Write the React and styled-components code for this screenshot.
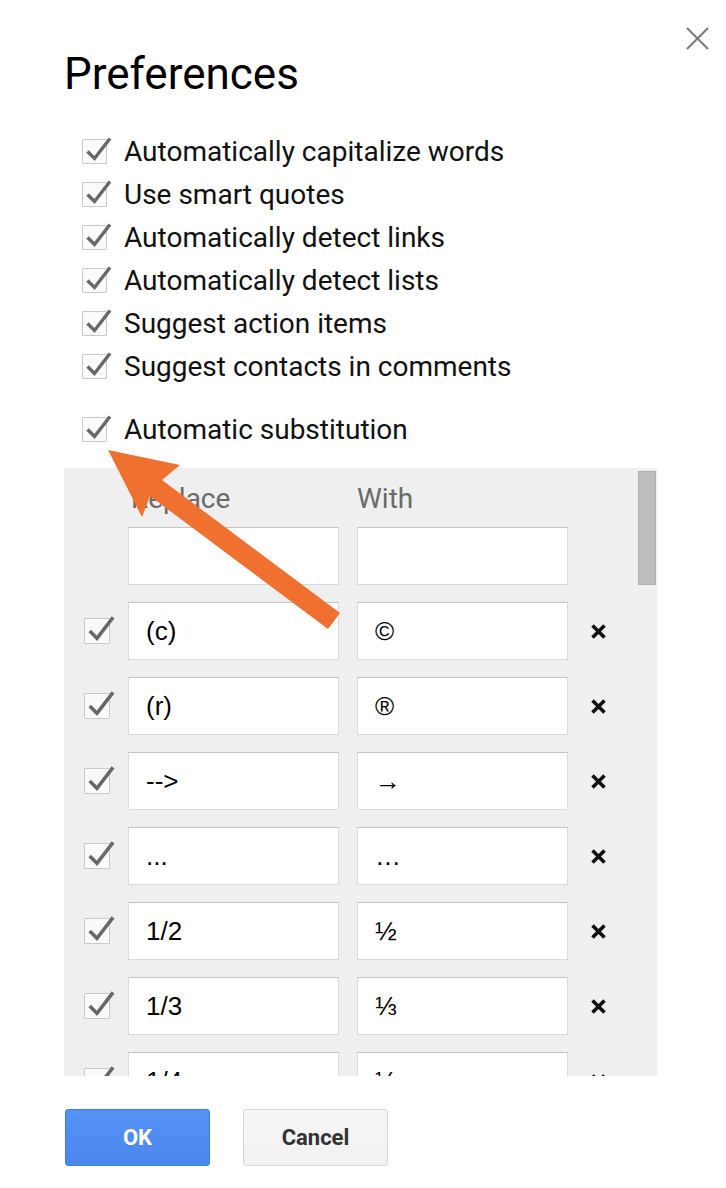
import React from "react";
import styled, { createGlobalStyle } from "styled-components";

const Global = createGlobalStyle`
  html, body { margin: 0; padding: 0; background: #fff; }
  body { font-family: Roboto, "Liberation Sans", Arial, sans-serif; }
  * { box-sizing: border-box; }
`;

const Dialog = styled.div`
  position: relative;
  width: 726px;
  height: 1188px;
  padding: 48px 0 0 64px;
  background: #fff;
  overflow: hidden;
`;

const Title = styled.h1`
  margin: 0;
  font-family: Roboto, sans-serif;
  font-weight: 400;
  font-size: 44px;
  line-height: 52px;
  color: #000;
`;

const CloseButton = styled.button`
  position: absolute;
  top: 27px;
  right: 17px;
  width: 23px;
  height: 23px;
  padding: 0;
  border: 0;
  background: none;
  display: flex;
`;

const OptionList = styled.div`
  display: flex;
  flex-direction: column;
  margin: 30px 0 0 18px;
`;

const OptionRow = styled.label`
  display: flex;
  align-items: center;
  gap: 17px;
  height: 43px;
  margin-top: ${(p) => (p.$spaced ? "20px" : "0")};
  font-family: Roboto, sans-serif;
  font-size: 28px;
  color: #111;
`;

const Box = styled.span`
  position: relative;
  flex: none;
  display: block;
  width: ${(p) => p.$size}px;
  height: ${(p) => p.$size}px;
  border: 1px solid #c9c9c9;
  background: ${(p) => p.$bg};
  border-radius: 1px;
`;

const CheckMark = styled.svg`
  position: absolute;
  left: 0;
  top: 0;
  overflow: visible;
`;

function Checkbox({ size = 25, bg = "#fbfbfb" }) {
  return (
    <Box $size={size} $bg={bg}>
      <CheckMark width={size} height={size} viewBox="0 0 25 25">
        <path
          d="M4.5 11.5 L11.5 18.5 L27 -1.5"
          fill="none"
          stroke="#686868"
          strokeWidth="3.4"
          strokeLinecap="butt"
          strokeLinejoin="miter"
        />
      </CheckMark>
    </Box>
  );
}

const Panel = styled.div`
  position: relative;
  width: 593px;
  height: 608px;
  margin-top: 17px;
  background: #efefef;
  overflow: hidden;
  padding: 14px 0 0 20px;
`;

const Grid = styled.div`
  display: grid;
  grid-template-columns: 26px 211px 211px 17px;
  column-gap: 18px;
  row-gap: 17px;
  align-items: center;
`;

const HeaderCell = styled.div`
  grid-column: ${(p) => p.$col};
  font-family: Roboto, sans-serif;
  font-size: 28px;
  line-height: 34px;
  color: #6a6a6a;
  padding-left: ${(p) => p.$indent}px;
  margin-bottom: -6px;
`;

const CheckCell = styled.div`
  grid-column: 1;
`;

const Field = styled.div`
  grid-column: ${(p) => p.$col};
  height: 58px;
  background: #fff;
  border: 1px solid #dadada;
  border-top-color: #c4c4c4;
  display: flex;
  align-items: center;
  padding-left: 17px;
  font-family: "Liberation Sans", Arial, sans-serif;
  font-size: 26px;
  color: #000;
  white-space: nowrap;
`;

const DeleteIcon = styled.svg`
  grid-column: 4;
  display: block;
  margin-left: 4px;
`;

const Thumb = styled.div`
  position: absolute;
  top: 3px;
  right: 1px;
  width: 18px;
  height: 114px;
  background: #bdbdbd;
  border: 1px solid #b0b0b0;
`;

const Buttons = styled.div`
  display: flex;
  gap: 33px;
  margin: 33px 0 0 1px;
`;

const Button = styled.button`
  width: 145px;
  height: 57px;
  border-radius: 3px;
  font-family: Roboto, sans-serif;
  font-weight: 700;
  font-size: 22px;
  padding: 0;
  border: 1px solid ${(p) => (p.$primary ? "#3a7ee8" : "#d8d8d8")};
  color: ${(p) => (p.$primary ? "#fff" : "#333")};
  background: ${(p) =>
    p.$primary
      ? "linear-gradient(#5592f5, #4b87ec)"
      : "linear-gradient(#f6f6f6, #f1f1f1)"};
`;

const ArrowLayer = styled.svg`
  position: absolute;
  left: 0;
  top: 0;
  pointer-events: none;
`;

const options = [
  "Automatically capitalize words",
  "Use smart quotes",
  "Automatically detect links",
  "Automatically detect lists",
  "Suggest action items",
  "Suggest contacts in comments",
];

const subs = [
  ["(c)", "©"],
  ["(r)", "®"],
  ["-->", "→"],
  ["...", "…"],
  ["1/2", "½"],
  ["1/3", "⅓"],
  ["1/4", "¼"],
  ["2/3", "⅔"],
];

function Cross() {
  return (
    <DeleteIcon width="17" height="17" viewBox="0 0 17 17">
      <path d="M2.5 2.5 L14.5 14.5 M14.5 2.5 L2.5 14.5" stroke="#111" strokeWidth="3.6" />
    </DeleteIcon>
  );
}

export default function App() {
  return (
    <>
      <Global />
      <Dialog>
        <CloseButton aria-label="Close">
          <svg width="23" height="23" viewBox="0 0 23 23">
            <path d="M1 1 L22 22 M22 1 L1 22" stroke="#7a7a7a" strokeWidth="2" />
          </svg>
        </CloseButton>
        <Title>Preferences</Title>
        <OptionList>
          {options.map((o) => (
            <OptionRow key={o}>
              <Checkbox />
              {o}
            </OptionRow>
          ))}
          <OptionRow $spaced>
            <Checkbox />
            Automatic substitution
          </OptionRow>
        </OptionList>
        <Panel>
          <Grid>
            <HeaderCell $col={2} $indent={3}>Replace</HeaderCell>
            <HeaderCell $col={3} $indent={0}>With</HeaderCell>
            <Field $col={2} />
            <Field $col={3} />
            {subs.map(([a, b]) => (
              <React.Fragment key={a}>
                <CheckCell>
                  <Checkbox size={26} bg="#fafafa" />
                </CheckCell>
                <Field $col={2}>{a}</Field>
                <Field $col={3}>{b}</Field>
                <Cross />
              </React.Fragment>
            ))}
          </Grid>
          <Thumb />
        </Panel>
        <Buttons>
          <Button $primary>OK</Button>
          <Button>Cancel</Button>
        </Buttons>
        <ArrowLayer width="726" height="1188" viewBox="0 0 726 1188">
          <polygon
            points="108,450 180,465 162,480 340,613 328,629 150,496 142,517"
            fill="#f07030"
          />
        </ArrowLayer>
      </Dialog>
    </>
  );
}
